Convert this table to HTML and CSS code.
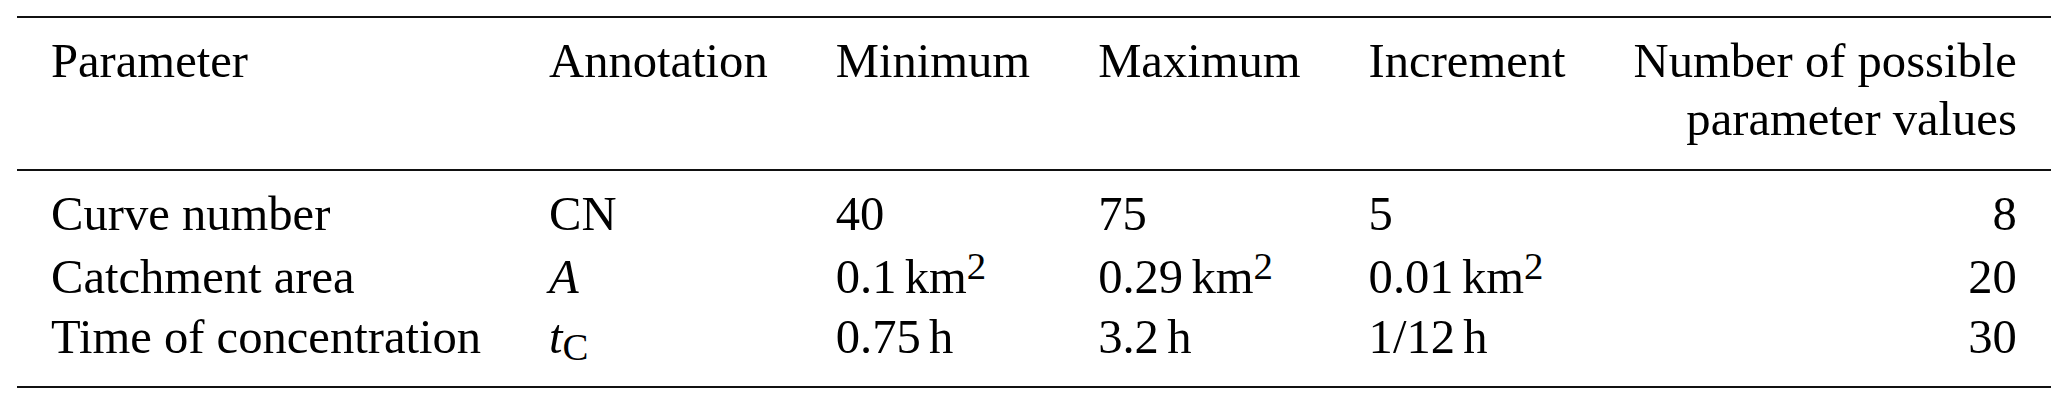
FILE: index.html
```html
<!DOCTYPE html>
<html lang="en">
<head>
    <meta charset="UTF-8">
    <meta name="viewport" content="width=device-width, initial-scale=1.0">
    <title>Parameter ranges</title>
    <link rel="stylesheet" href="styles.css">
</head>
<body>
    <table class="params">
        <thead>
            <tr>
                <th>Parameter</th>
                <th>Annotation</th>
                <th>Minimum</th>
                <th>Maximum</th>
                <th>Increment</th>
                <th class="num">Number of possible<br>parameter values</th>
            </tr>
        </thead>
        <tbody>
            <tr>
                <td>Curve number</td>
                <td>CN</td>
                <td>40</td>
                <td>75</td>
                <td>5</td>
                <td class="num">8</td>
            </tr>
            <tr>
                <td>Catchment area</td>
                <td><i>A</i></td>
                <td>0.1<span class="unit">km<sup>2</sup></span></td>
                <td>0.29<span class="unit">km<sup>2</sup></span></td>
                <td>0.01<span class="unit">km<sup>2</sup></span></td>
                <td class="num">20</td>
            </tr>
            <tr>
                <td>Time of concentration</td>
                <td><i>t</i><sub>C</sub></td>
                <td>0.75<span class="unit">h</span></td>
                <td>3.2<span class="unit">h</span></td>
                <td>1/12<span class="unit">h</span></td>
                <td class="num">30</td>
            </tr>
        </tbody>
    </table>
</body>
</html>
```

FILE: styles.css
```css
* { margin: 0; padding: 0; box-sizing: border-box; }
body {
    font-family: 'Liberation Serif', 'Times New Roman', serif;
    font-size: 48.6px;
    color: #000;
    background-color: #fff;
}
.params {
    border-collapse: separate;
    border-spacing: 0;
    margin: 16px 0 0 17px;
    border-top: 2px solid #111;
    border-bottom: 2px solid #111;
}
.params th, .params td {
    padding: 0 34px;
    line-height: 58px;
    text-align: left;
    font-weight: normal;
    vertical-align: top;
    white-space: nowrap;
}
.params th { padding-top: 14px; padding-bottom: 21px; border-bottom: 2px solid #111; }
.params tbody tr:first-child td { padding-top: 14px; padding-bottom: 5px; }
.params tbody tr:nth-child(2) td { padding-bottom: 2px; }
.params tbody tr:last-child td { padding-bottom: 20px; }
.params .num { text-align: right; }
.params .unit { margin-left: 0.17em; }
.params sup { font-size: 0.8em; vertical-align: 0.37em; line-height: 0; }
.params sub { font-size: 0.8em; vertical-align: -0.19em; line-height: 0; }
```
